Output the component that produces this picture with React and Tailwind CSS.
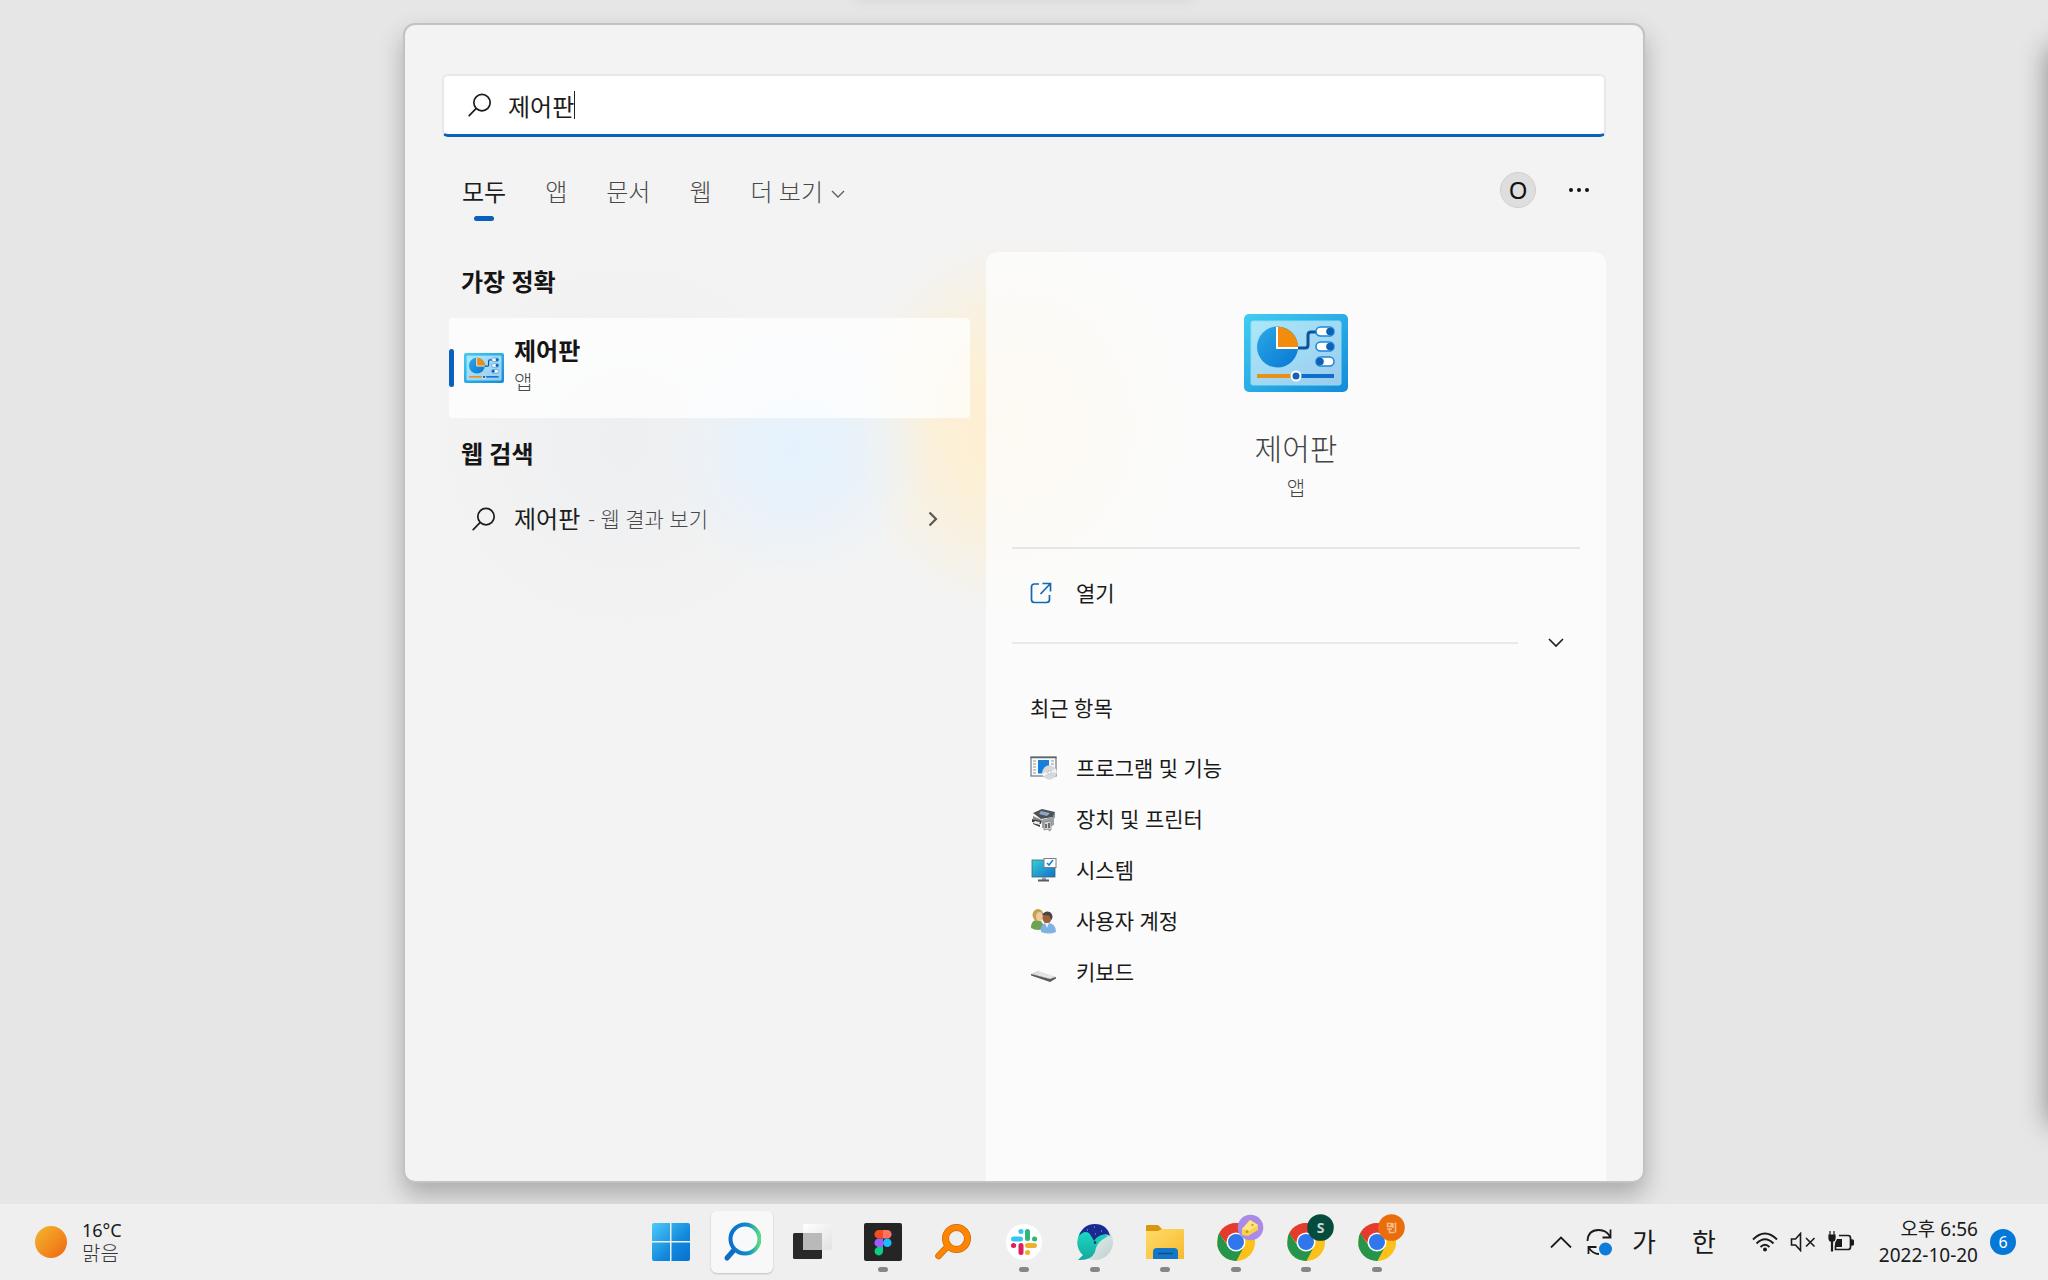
import { useState } from 'react';

const tabs = ['모두', '앱', '문서', '웹'];

function SearchGlyph() {
  return (
    <svg viewBox="0 0 24 24" className="h-6 w-6 shrink-0" fill="none" stroke="#1c1c1c" strokeWidth="1.7" strokeLinecap="round">
      <circle cx="14" cy="9.6" r="8.2" />
      <path d="M8 15.6 1.2 22.6" />
    </svg>
  );
}

function ControlPanelIcon({ className }) {
  return (
    <svg viewBox="0 0 104 78" className={className}>
      <defs>
        <linearGradient id="cpFrame" x1="0" y1="0" x2="1" y2="1">
          <stop offset="0" stopColor="#41cdf2" />
          <stop offset="1" stopColor="#138bd9" />
        </linearGradient>
        <linearGradient id="cpScreen" x1="0" y1="0" x2="1" y2="1">
          <stop offset="0" stopColor="#a9e8f9" />
          <stop offset="1" stopColor="#9acbee" />
        </linearGradient>
        <linearGradient id="cpPie" x1="0" y1="0" x2="1" y2="1">
          <stop offset="0" stopColor="#2ba8e6" />
          <stop offset="1" stopColor="#0877d4" />
        </linearGradient>
      </defs>
      <rect width="104" height="78" rx="5" fill="url(#cpFrame)" />
      <rect x="7" y="7" width="90" height="64" rx="2" fill="url(#cpScreen)" stroke="#8ddcf5" strokeWidth="1" />
      <path d="M52 34h9q3 0 3-3V21q0-3 3-3h6" fill="none" stroke="#0d539c" strokeWidth="3" />
      <circle cx="33.5" cy="33" r="20.5" fill="url(#cpPie)" />
      <path d="M33 34V12.5a21 21 0 0 1 21 21.500z" fill="#f28c0c" />
      <path d="M33 13v21h21" fill="none" stroke="#fff" strokeWidth="2" />
      {[[13, 86], [28, 86], [43, 76]].map(([y, x]) => (
        <g key={y}>
          <rect x="72" y={y} width="18" height="9" rx="4.5" fill="#fff" stroke="#1a86d6" strokeWidth="1.5" />
          <circle cx={x} cy={y + 4.5} r="3.8" fill="#0c60b5" />
        </g>
      ))}
      <rect x="13" y="60" width="35" height="4" fill="#e88f1c" />
      <rect x="56" y="60" width="34" height="4" fill="#0d6fcb" />
      <circle cx="52" cy="62" r="4.5" fill="#0f62b4" stroke="#fff" strokeWidth="2" />
    </svg>
  );
}

function ProgramsIcon() {
  return (
    <svg viewBox="0 0 28 26" className="h-[26px] w-7">
      <rect x="1" y="2" width="25" height="19" fill="#fafafa" stroke="#72777d" strokeWidth="1.2" />
      <path d="M.5 2.5h26" stroke="#5e646b" strokeWidth="1.5" />
      <path d="M3 6h3M3 9h3M3 12h3M3 15h3M3 18h3M21 6h3M21 9h3" stroke="#8d949b" strokeWidth="1" />
      <rect x="8" y="5" width="11" height="13.5" fill="#1480dc" />
      <circle cx="19.5" cy="17.5" r="7.2" fill="#d6d8dc" />
      <path d="M19.5 17.5 25.500 13.5a7.2 7.2 0 0 1 1.2 4zM19.5 17.5 13.5 21.5a7.2 7.2 0 0 1-1.2-4z" fill="#f3f3f5" />
      <circle cx="19.5" cy="17.5" r="1.7" fill="#fff" stroke="#b2b5ba" strokeWidth=".8" />
    </svg>
  );
}

function PrinterIcon() {
  return (
    <svg viewBox="0 0 28 26" className="h-[26px] w-7">
      <path d="M3 7 12 3l13 3-2 5-12 2z" fill="#4d5257" />
      <path d="m11 5 9 2-3 3-8-2z" fill="#8ba8c5" />
      <path d="M3 7v3l9 4 11-3 2-5v5l-2 4-11 2-9-4z" fill="#858a8f" />
      <path d="m2 13 9 2v3l-9-2zM3 17l7 2v2l-7-3z" fill="#3c3f42" />
      <path d="m5 15 5 1-1 2-6-1z" fill="#ededed" />
      <path d="m12 14 12-3v8l-5 2-7 1z" fill="#9ea2a6" />
      <path d="m14 16 7-1v9l-2 1v-2l-5 1z" fill="#d5d7d9" stroke="#777" strokeWidth=".7" />
      <path d="M16 18v4M19 17v5" stroke="#44484c" strokeWidth="1.5" />
    </svg>
  );
}

function SystemIcon() {
  return (
    <svg viewBox="0 0 28 26" className="h-[26px] w-7">
      <defs>
        <linearGradient id="monitor" x1="0" y1="0" x2="1" y2="1">
          <stop offset="0" stopColor="#35cfd2" />
          <stop offset="1" stopColor="#1170cc" />
        </linearGradient>
      </defs>
      <rect x="2" y="3" width="23" height="17" fill="url(#monitor)" stroke="#446579" strokeWidth=".8" />
      <path d="M12 20h4v3h-4z" fill="#9ba2a8" />
      <path d="M8 22.5h11v2H8z" fill="#555c63" />
      <rect x="14" y="1.5" width="12" height="9" fill="#fff" stroke="#75818a" strokeWidth="1" />
      <path d="m17 6 2 2 4-5" fill="none" stroke="#1581dd" strokeWidth="1.6" />
    </svg>
  );
}

function UsersIcon() {
  return (
    <svg viewBox="0 0 28 26" className="h-[26px] w-7">
      <path d="M1 20q0-8 6-8t7 8q-6 4-13 0z" fill="#6fa353" />
      <ellipse cx="8" cy="7" rx="5.5" ry="6" fill="#c2a24a" />
      <ellipse cx="9.5" cy="8.5" rx="3.5" ry="4.5" fill="#f0c99c" />
      <path d="M11 24q-1-9 6-9 9 0 9 9-7 3-15 0z" fill="#7fb1e3" />
      <ellipse cx="17" cy="10" rx="4.5" ry="5.5" fill="#9c633c" />
      <path d="M12 7q3-5 8-3 4 3 1.5 8L19 7.500z" fill="#4a4542" />
      <path d="m15 15 2 5 2-5z" fill="#eaf3fb" />
    </svg>
  );
}

function KeyboardIcon() {
  return (
    <svg viewBox="0 0 28 26" className="h-[26px] w-7">
      <path d="m1 15 7-3 18 6-6 4z" fill="#cfcfcf" />
      <path d="m1 15 19 5 6-2v1.500L20 23 1 16.500z" fill="#5b5b5b" />
      <path d="m5 14 16 5M8 13l15 5M9 17l4-3M13 18l4-3M17 19l4-3" stroke="#f5f5f5" strokeWidth=".8" />
    </svg>
  );
}

const recent = [
  { name: '프로그램 및 기능', Icon: ProgramsIcon },
  { name: '장치 및 프린터', Icon: PrinterIcon },
  { name: '시스템', Icon: SystemIcon },
  { name: '사용자 계정', Icon: UsersIcon },
  { name: '키보드', Icon: KeyboardIcon },
];

function StartIcon() {
  return (
    <svg viewBox="0 0 38 38" className="h-[38px] w-[38px]">
      <defs>
        <linearGradient id="win" gradientUnits="userSpaceOnUse" x1="0" y1="0" x2="38" y2="38">
          <stop offset="0" stopColor="#4ccbf8" />
          <stop offset=".6" stopColor="#1288dc" />
          <stop offset="1" stopColor="#0571cf" />
        </linearGradient>
      </defs>
      <path d="M2 0h16v18H0V2q0-2 2-2zM19.500 0h16.500q2 0 2 2v16H19.500zM0 19.500h18V38H2q-2 0-2-2zM19.500 19.500H38V36q0 2-2 2H19.500z" fill="url(#win)" />
    </svg>
  );
}

function TaskSearchIcon() {
  return (
    <svg viewBox="0 0 38 40" className="h-10 w-[38px]" fill="none" strokeLinecap="round">
      <defs>
        <linearGradient id="lens" x1="0" y1="0" x2="1" y2="0">
          <stop offset="0" stopColor="#0a6fce" />
          <stop offset=".6" stopColor="#128bc5" />
          <stop offset="1" stopColor="#58da83" />
        </linearGradient>
      </defs>
      <path d="M11 28 4 36" stroke="#0d6cc6" strokeWidth="5" />
      <circle cx="22" cy="17" r="14.5" stroke="url(#lens)" strokeWidth="4" fill="#f7f9fa" />
    </svg>
  );
}

function TaskViewIcon() {
  return (
    <svg viewBox="0 0 40 38" className="h-[38px] w-10">
      <defs>
        <linearGradient id="tvWhite" x1="0" y1="0" x2="1" y2="1">
          <stop offset="0" stopColor="#fff" />
          <stop offset="1" stopColor="#e2e2e2" />
        </linearGradient>
      </defs>
      <rect x="11" y="1" width="29" height="26" rx="2" fill="url(#tvWhite)" />
      <rect x="1" y="10" width="29" height="26" rx="1.5" fill="#292929" />
      <path d="M11 10h19v17H11z" fill="#b9b9b9" />
    </svg>
  );
}

function FigmaIcon() {
  return (
    <svg viewBox="0 0 38 38" className="h-[38px] w-[38px]">
      <rect width="38" height="38" rx="2" fill="#262525" />
      <path d="M19 7v8.5h-4.300a4.250 4.250 0 0 1 0-8.5z" fill="#f24e1e" />
      <path d="M19 7h4.300a4.250 4.250 0 0 1 0 8.5H19z" fill="#ff7262" />
      <path d="M19 15.500V24h-4.300a4.250 4.250 0 0 1 0-8.5z" fill="#a259ff" />
      <circle cx="23.3" cy="19.7" r="4.25" fill="#1abcfe" />
      <path d="M19 24v4a4.250 4.250 0 1 1-4.300-4z" fill="#0acf83" />
    </svg>
  );
}

function EverythingIcon() {
  return (
    <svg viewBox="0 0 38 38" className="h-[38px] w-[38px]" fill="none" strokeLinecap="round">
      <path d="M14 23 4.500 33" stroke="#c96a0d" strokeWidth="6.5" />
      <circle cx="22.5" cy="15.5" r="11" stroke="#c96a0d" strokeWidth="7" />
      <path d="M14 23 4.500 33" stroke="#ff8500" strokeWidth="5" />
      <circle cx="22.5" cy="15.5" r="11" stroke="#ff8500" strokeWidth="5.5" />
    </svg>
  );
}

function SlackIcon() {
  return (
    <svg viewBox="0 0 38 38" className="h-[38px] w-[38px]" strokeLinecap="round" strokeWidth="5" fill="none">
      <circle cx="19" cy="19" r="18" fill="#fff" />
      <path d="M8.500 16h7M16 8.500h-.1" stroke="#36c5f0" />
      <path d="M22.500 8.500v7M29.500 16h.1" stroke="#2eb67d" />
      <path d="M22.500 22.500h7M22.500 29.500h.1" stroke="#ecb22e" />
      <path d="M16 22.500v7M8.500 22.500h.1" stroke="#e01e5a" />
    </svg>
  );
}

function WhaleIcon() {
  return (
    <svg viewBox="0 0 38 38" className="h-[38px] w-[38px]">
      <defs>
        <linearGradient id="whaleBody" x1="0" y1="0" x2="0" y2="1">
          <stop offset="0" stopColor="#1fe0c6" />
          <stop offset="1" stopColor="#13a79f" />
        </linearGradient>
        <linearGradient id="whaleBelly" x1="0" y1="0" x2="1" y2="1">
          <stop offset="0" stopColor="#f8fcfc" />
          <stop offset="1" stopColor="#bccfcf" />
        </linearGradient>
      </defs>
      <circle cx="19" cy="19" r="18" fill="url(#whaleBelly)" />
      <path d="M4 9Q-1 19 3 27q2 4 4 5-2 2-5 5 13 1 17-8 1-8 7-12 3-2 6-4L18 4z" fill="url(#whaleBody)" />
      <path d="M3 13Q7 1 19 1q12 0 15 12-4-3-8-1-5 1-8 6-2-4-5-8-5-3-10 3z" fill="#1b2a92" />
      <circle cx="19" cy="19.5" r="1.2" fill="#15324e" />
      <path d="M11 7h.8M18 4h.8M25 8h.8M19 11h.8" stroke="#dfe6ff" strokeWidth=".9" />
    </svg>
  );
}

function FolderIcon() {
  return (
    <svg viewBox="0 0 40 36" className="h-9 w-10">
      <defs>
        <linearGradient id="folder" x1="0" y1="0" x2="1" y2="1">
          <stop offset="0" stopColor="#ffdc6b" />
          <stop offset="1" stopColor="#f6b92d" />
        </linearGradient>
      </defs>
      <path d="M1 2q0-1 1-1h11l4 4v4H1z" fill="#d9970e" />
      <path d="M1 7h12l4-2h21q1 0 1 1v29H1z" fill="url(#folder)" />
      <path d="M8 35v-7q0-4 4-4h17q4 0 4 4v7z" fill="#1376c6" />
      <path d="M13 29.500h15" stroke="#0b4d89" strokeWidth="1.4" />
    </svg>
  );
}

function ChromeIcon({ id, badge }) {
  return (
    <svg viewBox="0 0 48 48" className="h-12 w-12">
      <defs>
        <clipPath id={id}>
          <circle cx="20" cy="28" r="19" />
        </clipPath>
      </defs>
      <g clipPath={`url(#${id})`}>
        <circle cx="20" cy="28" r="19" fill="#fcc11a" />
        <path d="M0 6h42v14H20l-7 12L0 16z" fill="#e33b2e" />
        <path d="M2 17.500 12.200 32.500 28 33 19 50H0z" fill="#24954a" />
        <path d="M20 20h22v8l-2 22H19l9-17z" fill="#fcc11a" />
      </g>
      <circle cx="20" cy="28" r="9.5" fill="#fff" />
      <circle cx="20" cy="28" r="8" fill="#2f77ea" />
      {badge}
    </svg>
  );
}

const cheeseBadge = (
  <g>
    <circle cx="34.5" cy="13.5" r="12.8" fill="#a98ae8" />
    <path d="m26 15 8-9 8 5v5l-10 6-6-1z" fill="#f7d24c" />
    <path d="m26 15 8-9 8 5-9 6z" fill="#ffe682" />
    <circle cx="31" cy="17.5" r="1.5" fill="#d39a24" />
    <circle cx="36.5" cy="11" r="1.3" fill="#d9a52f" />
  </g>
);

const sBadge = (
  <g>
    <circle cx="34.5" cy="13.5" r="13.3" fill="#064c3e" />
    <text x="34.5" y="18.5" textAnchor="middle" fontSize="14" fontWeight="700" fill="#c9d6d1">S</text>
  </g>
);

const orangeBadge = (
  <g>
    <circle cx="34.5" cy="13.5" r="13.3" fill="#ea6d0b" />
    <path d="M30.500 9.500h4v3h-4zM38.500 8.500v10M30 15h5M32.500 15v3.500h5M36 9v5" stroke="#f9b98b" strokeWidth="1.6" fill="none" />
  </g>
);

const apps = [
  { name: '시작', icon: <StartIcon /> },
  { name: '검색', icon: <TaskSearchIcon />, active: true },
  { name: '작업 보기', icon: <TaskViewIcon /> },
  { name: 'Figma', icon: <FigmaIcon />, running: true },
  { name: 'Everything', icon: <EverythingIcon /> },
  { name: 'Slack', icon: <SlackIcon />, running: true },
  { name: 'Whale', icon: <WhaleIcon />, running: true },
  { name: '파일 탐색기', icon: <FolderIcon />, running: true },
  { name: 'Chrome 1', icon: <ChromeIcon id="chromeA" badge={cheeseBadge} />, running: true, tall: true },
  { name: 'Chrome 2', icon: <ChromeIcon id="chromeB" badge={sBadge} />, running: true, tall: true },
  { name: 'Chrome 3', icon: <ChromeIcon id="chromeC" badge={orangeBadge} />, running: true, tall: true },
];

function SearchTabs() {
  return (
    <div className="flex h-[54px] items-center justify-between pr-4 pl-5">
      <nav className="flex items-center gap-[39px] pt-1 text-2xl/8 font-light text-[#484848]">
        {tabs.map((tab, i) => (
          <button key={tab} className={i === 0 ? 'relative font-normal text-[#1c1c1c]' : ''}>
            {tab}
            {i === 0 && <span className="absolute inset-x-0 top-10 mx-auto h-[5px] w-5 rounded-full bg-[#0c60bd]" />}
          </button>
        ))}
        <button className="flex items-center gap-2">
          더 보기
          <svg viewBox="0 0 14 8" className="mt-1 h-2 w-[14px]" fill="none" stroke="#5c5c5c" strokeWidth="1.3">
            <path d="m1 1 6 6 6-6" />
          </svg>
        </button>
      </nav>
      <div className="flex items-center gap-8">
        <button className="flex h-9 w-9 items-center justify-center rounded-full border border-[#cfcfcf] bg-[#dedede] text-2xl/8 text-[#111]">O</button>
        <button aria-label="옵션">
          <svg viewBox="0 0 22 6" className="h-[6px] w-[22px]" fill="#111">
            <circle cx="3" cy="3" r="2" />
            <circle cx="11" cy="3" r="2" />
            <circle cx="19" cy="3" r="2" />
          </svg>
        </button>
      </div>
    </div>
  );
}

function Results() {
  return (
    <section className="flex w-[521px] flex-col">
      <h2 className="mt-[14px] pl-3 text-2xl/8 font-bold text-[#151515]">가장 정확</h2>
      <button className="mt-5 flex h-[100px] items-center rounded bg-white/75 text-left">
        <span className="h-[38px] w-[5px] rounded-full bg-[#0c60bd]" />
        <ControlPanelIcon className="ml-[10px] h-[30px] w-10" />
        <span className="mb-1 ml-[10px] flex flex-col gap-[2px]">
          <span className="text-2xl/8 font-bold text-[#151515]">제어판</span>
          <span className="text-xl/7 font-light text-[#484848]">앱</span>
        </span>
      </button>
      <h2 className="mt-5 pl-3 text-2xl/8 font-bold text-[#151515]">웹 검색</h2>
      <button className="mt-[25px] flex h-12 items-center pr-8 pl-[23px] text-left">
        <SearchGlyph />
        <span className="ml-[18px] text-2xl/8 text-[#1c1c1c]">제어판</span>
        <span className="ml-2 text-[21px]/8 font-light text-[#484848]">- 웹 결과 보기</span>
        <svg viewBox="0 0 10 16" className="ml-auto h-4 w-[10px]" fill="none" stroke="#5a5752" strokeWidth="2.2">
          <path d="m1.500 1.500 6.500 6.500-6.500 6.500" />
        </svg>
      </button>
    </section>
  );
}

function Preview() {
  return (
    <section className="ml-4 flex flex-1 flex-col rounded-t-xl bg-[#fdfdfd]/80 px-[26px]">
      <div className="flex flex-col items-center pt-[62px]">
        <ControlPanelIcon className="h-[78px] w-[104px]" />
        <h1 className="mt-[37px] text-3xl/10 font-light text-[#444]">제어판</h1>
        <p className="mt-1 text-xl/8 font-light text-[#444]">앱</p>
      </div>
      <hr className="mt-[42px] border-t-2 border-[#e6e6e6]" />
      <button className="mt-7 flex h-8 items-center pl-[18px] text-[21px]/8 text-[#1a1a1a]">
        <svg viewBox="0 0 22 22" className="mr-6 h-[22px] w-[22px]" fill="none" stroke="#1268b8" strokeWidth="1.7">
          <path d="M9 2H4.500Q1.500 2 1.500 5v12.500q0 3 3 3h12q3 0 3-3V13M12.500 1.500h8v8M20 2l-9.500 10" />
        </svg>
        열기
      </button>
      <div className="mt-[25px] flex h-[18px] items-center">
        <hr className="flex-1 border-t-2 border-[#e9e9e9]" />
        <button aria-label="펼치기" className="mr-4 ml-[30px]">
          <svg viewBox="0 0 16 10" className="h-[10px] w-4" fill="none" stroke="#222" strokeWidth="1.7">
            <path d="m1 1 7 7 7-7" />
          </svg>
        </button>
      </div>
      <h2 className="mt-10 pl-[18px] text-[21px]/8 text-[#1a1a1a]">최근 항목</h2>
      <ul className="mt-[18px]">
        {recent.map(({ name, Icon }) => (
          <li key={name}>
            <button className="flex h-[51px] w-full items-center pl-[18px] text-[21px]/8 text-[#1a1a1a]">
              <Icon />
              <span className="ml-[18px]">{name}</span>
            </button>
          </li>
        ))}
      </ul>
    </section>
  );
}

function SearchWindow() {
  const [query, setQuery] = useState('제어판');

  return (
    <main className="mx-auto flex h-[1160px] w-[1242px] max-w-full flex-col overflow-hidden rounded-xl border-2 border-[#c2c2c2] bg-[#f3f3f3] bg-[radial-gradient(circle_at_390px_425px,#e5f2fd_0,#e8f2fa_50px,#e8f2fa00_135px),radial-gradient(ellipse_170px_190px_at_610px_400px,#fdeed2_0,#fcf0d6_40%,#fcf0d600_100%),radial-gradient(circle_at_220px_420px,#eeeff1_0,#f3f3f300_200px)] px-[37px] pt-[49px] shadow-[0_12px_24px_rgba(0,0,0,0.26)]">
      <label className="flex h-[63px] items-center rounded-md border-2 border-b-[3px] border-[#e7e7e7] border-b-[#0c62b8] bg-white pl-6">
        <SearchGlyph />
        <span className="ml-4 flex items-center">
          <input
            aria-label="검색"
            value={query}
            onChange={(e) => setQuery(e.target.value)}
            className="field-sizing-content h-10 bg-transparent text-2xl/8 text-[#1c1c1c] outline-none"
          />
          <span className="h-7 w-px bg-[#222]" />
        </span>
      </label>
      <div className="mt-[26px]">
        <SearchTabs />
      </div>
      <div className="mt-[35px] flex flex-1 pl-[7px]">
        <Results />
        <Preview />
      </div>
    </main>
  );
}

function Tray() {
  return (
    <div className="flex items-center justify-end pr-8 text-[#1a1a1a]">
      <button aria-label="숨겨진 아이콘">
        <svg viewBox="0 0 22 12" className="h-3 w-[22px]" fill="none" stroke="#1a1a1a" strokeWidth="1.8">
          <path d="m1 11.500 10-10 10 10" />
        </svg>
      </button>
      <button aria-label="업데이트" className="ml-[14px]">
        <svg viewBox="0 0 26 28" className="h-7 w-[26px]" fill="none" stroke="#1a1a1a" strokeWidth="1.8">
          <path d="M1.500 13Q2 2 12.500 2 21 2 24 9M24.500 1.500v8h-8M2.500 26v-7h8M3 20q4 6 10 6" />
          <circle cx="19.5" cy="21" r="6.5" fill="#0c7bdc" stroke="none" />
        </svg>
      </button>
      <button className="ml-5 text-[26px]/8">가</button>
      <button className="ml-9 text-[26px]/8">한</button>
      <button className="ml-9 flex items-center gap-3">
        <svg viewBox="0 0 26 20" className="h-5 w-[26px]" fill="none" stroke="#1a1a1a" strokeWidth="1.8">
          <path d="M1 7.500Q13-4.500 25 7.500M4.500 11.500q8.500-8.500 17 0M8.500 15q4.500-4.500 9 0" />
          <circle cx="13" cy="17.5" r="2" fill="#1a1a1a" stroke="none" />
        </svg>
        <svg viewBox="0 0 26 20" className="h-5 w-[26px]" fill="none" stroke="#1a1a1a" strokeWidth="1.6">
          <path d="M1.500 7h4l5-5.500v17l-5-5.500h-4zM16 6l8.500 8.500M24.500 6 16 14.500" />
        </svg>
        <svg viewBox="0 0 26 22" className="h-[22px] w-[26px]" fill="none" stroke="#1a1a1a" strokeWidth="1.7">
          <path d="M11 4.500h9q2.500 0 2.500 2.500v9q0 2.500-2.500 2.500H7.500v-4" />
          <path d="M23 9h1q1.500 0 1.500 2.500T24 14h-1z" fill="#1a1a1a" />
          <path d="M9 8h5v8H7v-4z" fill="#1a1a1a" stroke="none" />
          <path d="M1 4h6v3q0 3-2.500 3.500V20h-1v-9.500Q1 10 1 7zM2 0v4M6 0v4" fill="#1a1a1a" strokeWidth="1.2" />
        </svg>
      </button>
      <button className="ml-[25px] flex flex-col items-end text-[19px]/[26px]">
        <span>오후 6:56</span>
        <span>2022-10-20</span>
      </button>
      <button className="ml-3 flex h-[26px] w-[26px] items-center justify-center rounded-full bg-[#0478d8] text-base/6 text-white">6</button>
    </div>
  );
}

function Taskbar() {
  return (
    <footer className="relative mt-[21px] grid h-[76px] grid-cols-[1fr_768px_1fr] bg-[#efefef]">
      <button className="flex items-center pl-[35px] text-left text-[#1a1a1a]">
        <span className="mr-[15px] h-8 w-8 rounded-full bg-linear-to-br from-[#efb82e] to-[#f0640f]" />
        <span className="flex flex-col">
          <span className="text-lg/6">16°C</span>
          <span className="text-xl/6 font-light text-[#333]">맑음</span>
        </span>
      </button>
      <div className="flex items-center justify-between">
        {apps.map((app) => (
          <button
            key={app.name}
            aria-label={app.name}
            className={`relative flex h-[62px] w-[62px] justify-center rounded-md ${app.tall ? 'items-start pt-[3px] pl-2' : 'items-center'} ${app.active ? 'bg-[#f8f8f8] shadow-[0_1px_2px_rgba(0,0,0,0.2)]' : ''}`}
          >
            {app.icon}
            {app.running && <span className="absolute inset-x-0 bottom-px mx-auto h-[5px] w-[10px] rounded-full bg-[#868686]" />}
          </button>
        ))}
      </div>
      <Tray />
    </footer>
  );
}

// shadows that neighbouring off-screen windows cast on the desktop
function EdgeShadows() {
  return (
    <div aria-hidden="true">
      <span className="absolute top-10 -right-10 h-[1080px] w-10 rounded-lg shadow-[0_6px_28px_rgba(0,0,0,0.4)]" />
      <span className="absolute inset-x-0 -top-10 mx-auto h-10 w-[340px] shadow-[0_2px_12px_rgba(0,0,0,0.06)]" />
    </div>
  );
}

export default function App() {
  return (
    <div className="relative flex min-h-screen flex-col overflow-hidden bg-[#e6e6e6] pt-[23px] font-['Noto_Sans','Noto_Sans_CJK_KR',sans-serif]">
      <EdgeShadows />
      <SearchWindow />
      <Taskbar />
    </div>
  );
}
